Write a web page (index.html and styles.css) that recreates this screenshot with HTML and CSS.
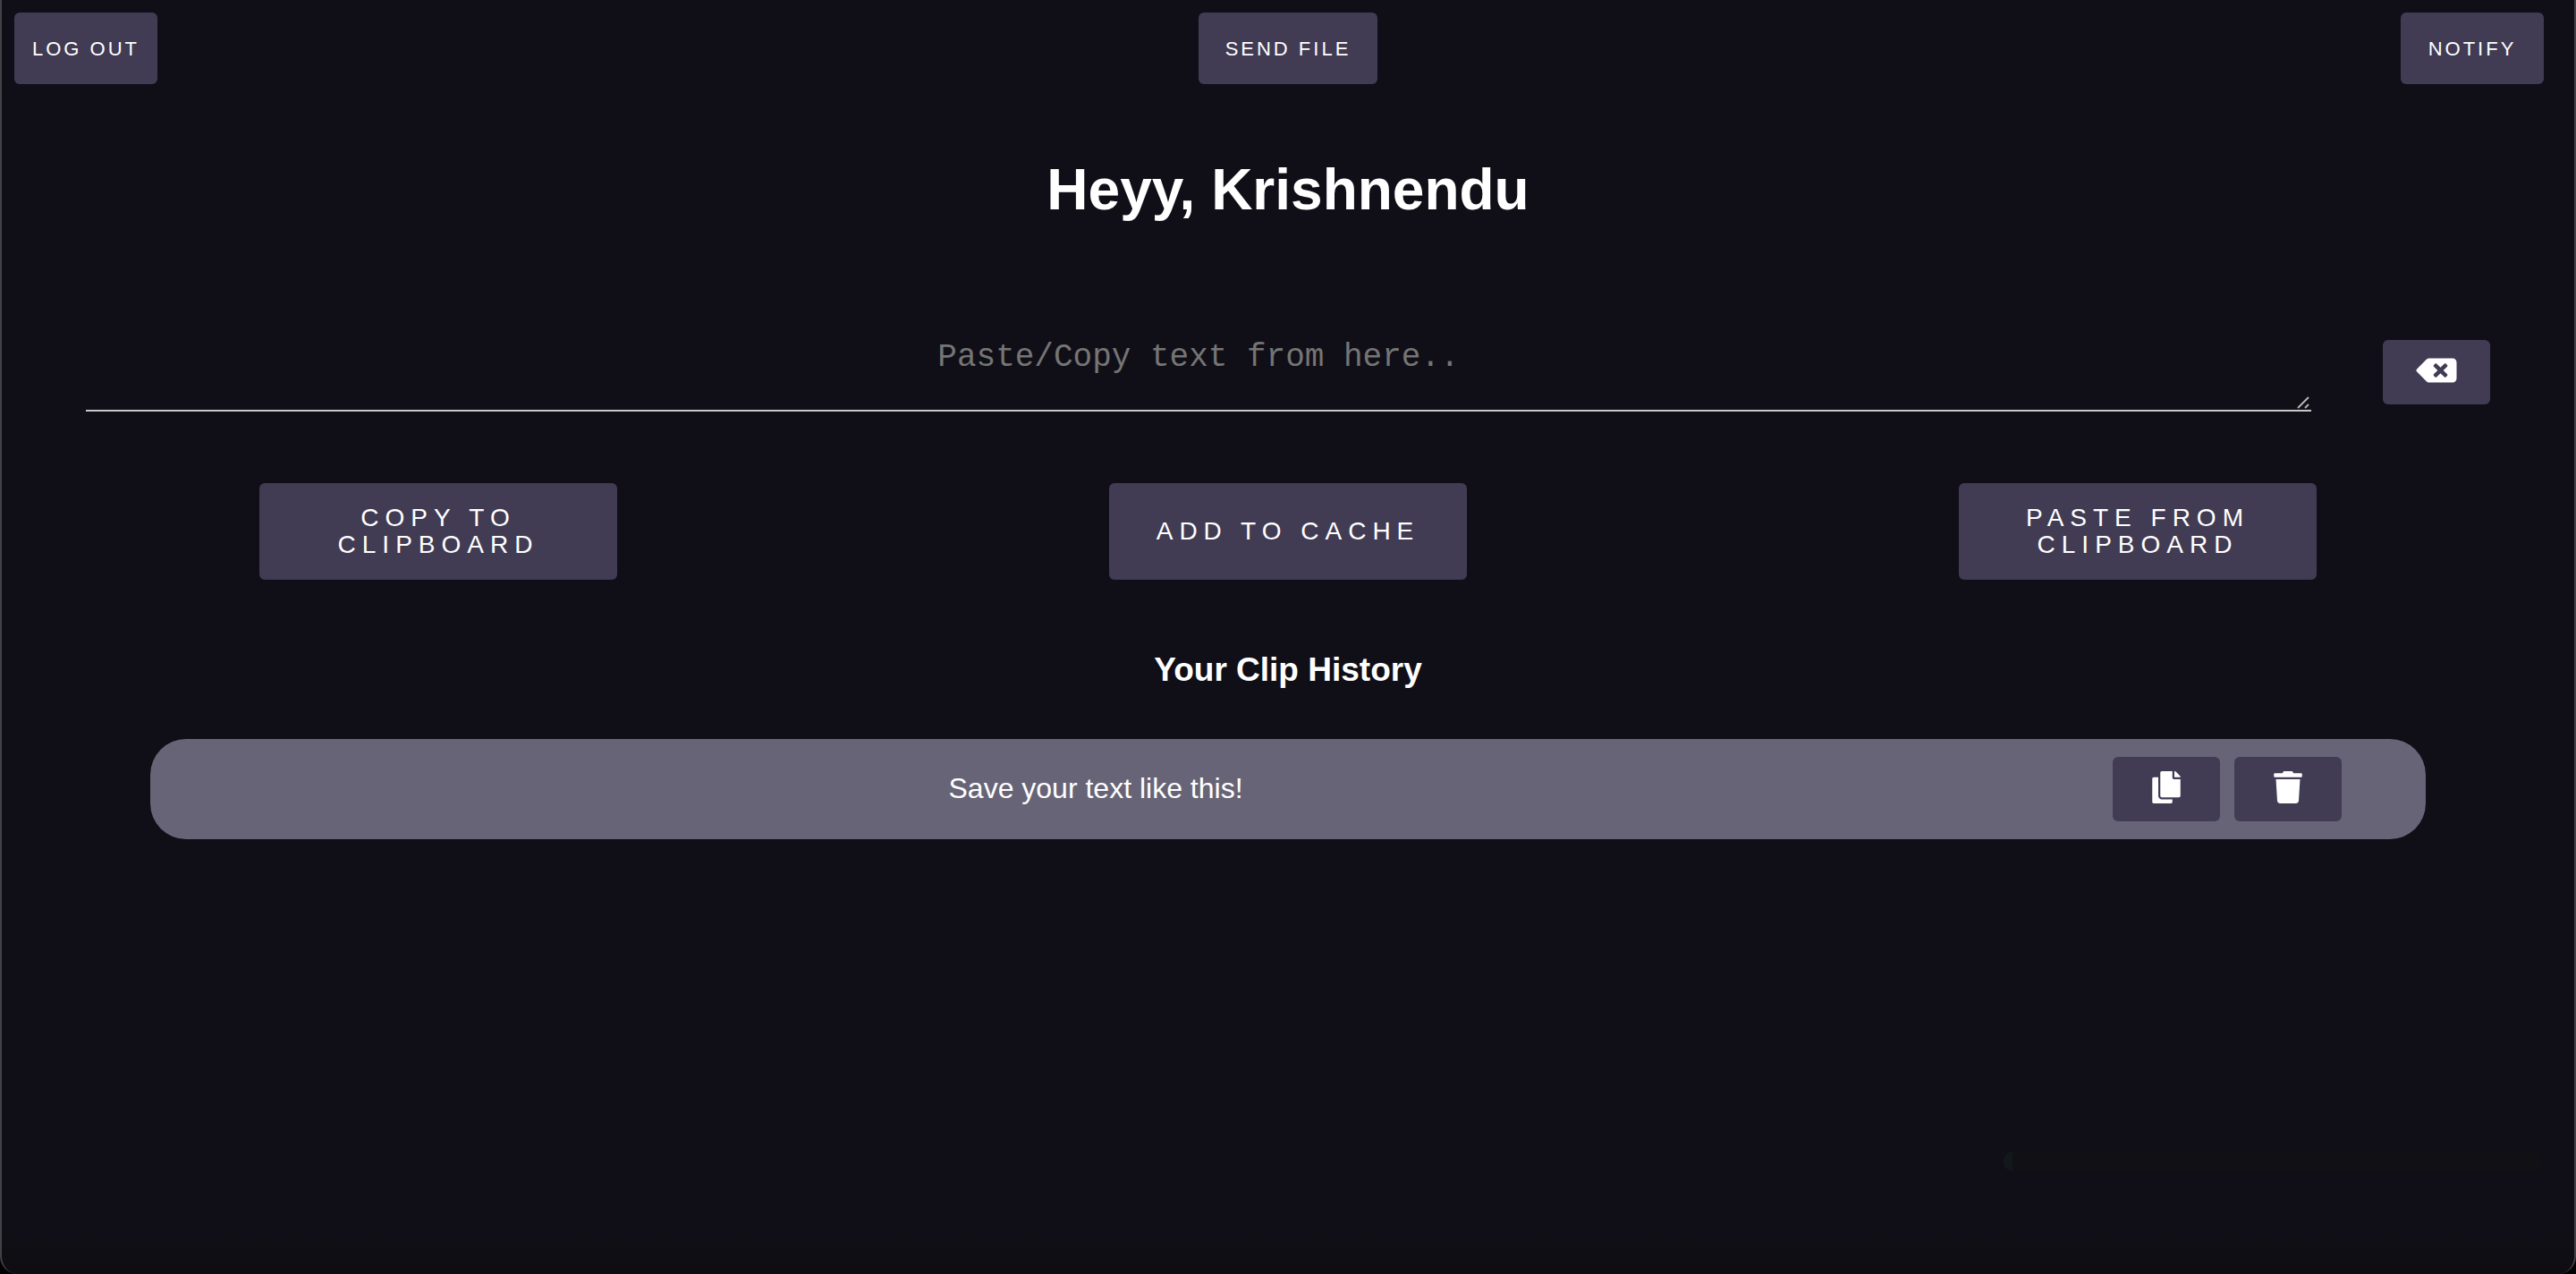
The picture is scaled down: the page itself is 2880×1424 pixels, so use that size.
FILE: index.html
```html
<!DOCTYPE html>
<html lang="en">
<head>
  <meta charset="utf-8">
  <meta name="viewport" content="width=device-width, initial-scale=1">
  <title>Clipboard</title>
  <link rel="stylesheet" href="styles.css">
</head>
<body>
  <div class="frame">
    <header class="topbar">
      <button class="btn btn-small" type="button">LOG OUT</button>
      <button class="btn btn-small btn-send" type="button">SEND FILE</button>
      <button class="btn btn-small btn-notify" type="button">NOTIFY</button>
    </header>

    <main>
      <h1 class="greeting">Heyy, Krishnendu</h1>

      <div class="editor">
        <div class="field">
          <textarea class="field-input" aria-label="Clip text" placeholder="Paste/Copy text from here.."></textarea>
          <svg class="field-grip" viewBox="0 0 14 14" aria-hidden="true">
            <path d="M1 13 13 1M9 13l4-4" fill="none" stroke="#b4b4b4" stroke-width="2"/>
          </svg>
        </div>
        <button class="btn btn-icon" type="button" aria-label="Clear text">
          <svg class="icon icon-wide" viewBox="0 0 640 512" aria-hidden="true"><path d="M576 64H205.26A63.97 63.97 0 0 0 160 82.75L9.37 233.37c-12.5 12.5-12.5 32.76 0 45.25L160 429.25c12 12 28.28 18.75 45.25 18.75H576c35.35 0 64-28.65 64-64V128c0-35.35-28.65-64-64-64zm-84.69 254.06c6.25 6.25 6.25 16.38 0 22.63l-22.62 22.62c-6.25 6.25-16.38 6.25-22.63 0L384 301.25l-62.06 62.06c-6.25 6.25-16.38 6.25-22.63 0l-22.62-22.62c-6.25-6.25-6.25-16.38 0-22.63L338.75 256l-62.06-62.06c-6.25-6.25-6.25-16.38 0-22.63l22.62-22.62c6.25-6.25 16.38-6.25 22.63 0L384 210.75l62.06-62.06c6.25-6.25 16.38-6.25 22.63 0l22.62 22.62c6.25 6.25 6.25 16.38 0 22.63L429.25 256l62.06 62.06z"/></svg>
        </button>
      </div>

      <div class="actions">
        <button class="btn btn-large" type="button">COPY TO CLIPBOARD</button>
        <button class="btn btn-large" type="button">ADD TO CACHE</button>
        <button class="btn btn-large" type="button">PASTE FROM CLIPBOARD</button>
      </div>

      <h2 class="history-title">Your Clip History</h2>
      <ul class="history">
        <li class="clip">
          <span class="clip-text">Save your text like this!</span>
          <div class="clip-tools">
            <button class="btn btn-icon" type="button" aria-label="Copy clip">
              <svg class="icon" viewBox="0 0 448 512" aria-hidden="true"><path d="M320 448v40c0 13.255-10.745 24-24 24H24c-13.255 0-24-10.745-24-24V120c0-13.255 10.745-24 24-24h72v296c0 30.879 25.121 56 56 56h168zm0-344V0H152c-13.255 0-24 10.745-24 24v368c0 13.255 10.745 24 24 24h272c13.255 0 24-10.745 24-24V128H344c-13.2 0-24-10.8-24-24zm120.971-31.029L375.029 7.029A24 24 0 0 0 358.059 0H352v96h96v-6.059a24 24 0 0 0-7.029-16.97z"/></svg>
            </button>
            <button class="btn btn-icon" type="button" aria-label="Delete clip">
              <svg class="icon" viewBox="0 0 448 512" aria-hidden="true"><path d="M432 32H312l-9.4-18.7A24 24 0 0 0 281.1 0H166.8a23.72 23.72 0 0 0-21.4 13.3L136 32H16A16 16 0 0 0 0 48v32a16 16 0 0 0 16 16h416a16 16 0 0 0 16-16V48a16 16 0 0 0-16-16zM53.2 467a48 48 0 0 0 47.9 45h245.8a48 48 0 0 0 47.9-45L416 128H32z"/></svg>
            </button>
          </div>
        </li>
      </ul>
    </main>

    <div class="toast-bar" aria-hidden="true"></div>
  </div>
</body>
</html>
```
FILE: styles.css
```css
* {
  box-sizing: border-box;
}

body {
  margin: 0;
  background: #000;
  color: #fff;
  font-family: "Liberation Sans", Arial, Helvetica, sans-serif;
}

.frame {
  position: relative;
  min-height: 100vh;
  border: 2px solid #424146;
  border-width: 0 2px;
  border-radius: 0 0 20px 20px;
  background: linear-gradient(to top, #0e0d11, #100f17 48px);
}

/* Buttons */

.btn {
  border: 0;
  border-radius: 6px;
  padding: 0;
  background: #413c54;
  color: #fff;
  font-family: inherit;
  text-align: center;
  cursor: pointer;
}

.btn-small {
  width: 160px;
  height: 80px;
  padding-top: 2px;
  font-size: 22px;
  letter-spacing: 3px;
}

.btn-send {
  justify-self: center;
  width: 200px;
}

.btn-notify {
  justify-self: end;
  margin-right: 20px;
}

.btn-large {
  width: 400px;
  height: 108px;
  padding: 0 24px;
  font-size: 28px;
  line-height: 30px;
  letter-spacing: 7px;
}

.btn-icon {
  display: flex;
  align-items: center;
  justify-content: center;
  width: 120px;
  height: 72px;
  padding-bottom: 4px;
}

.icon {
  width: 32px;
  height: 36px;
  fill: #fff;
}

.icon-wide {
  width: 46px;
}

/* Header */

.topbar {
  display: grid;
  grid-template-columns: 1fr 1fr 1fr;
  padding: 14px 14px 0;
}

.greeting {
  margin: 82px 0 0;
  font-size: 64px;
  line-height: 72px;
  text-align: center;
}

/* Text entry */

.editor {
  display: flex;
  align-items: center;
  gap: 80px;
  margin-top: 124px;
  padding: 0 94px;
}

.field {
  position: relative;
  flex: 1;
  display: flex;
}

.field-input {
  flex: 1;
  height: 88px;
  padding: 8px 0 0;
  border: 0;
  border-bottom: 2px solid #c8c8c8;
  outline: 0;
  background: transparent;
  color: #fff;
  font-family: "Liberation Mono", "Courier New", monospace;
  font-size: 36px;
  line-height: 40px;
  text-align: center;
  resize: none;
}

.field-input::placeholder {
  color: #757575;
}

.field-grip {
  position: absolute;
  right: 2px;
  bottom: 3px;
  width: 14px;
  height: 14px;
}

.actions {
  display: grid;
  grid-template-columns: repeat(3, 1fr);
  justify-items: center;
  margin-top: 80px;
  padding: 0 13px;
}

/* History */

.history-title {
  margin: 80px 0 0;
  font-size: 37px;
  line-height: 42px;
  text-align: center;
}

.history {
  margin: 56px 166px 0;
  padding: 0;
  list-style: none;
}

.clip {
  display: flex;
  align-items: center;
  padding: 20px 94px 20px 0;
  border-radius: 40px;
  background: #686477;
}

.clip-text {
  flex: 1;
  padding-bottom: 2px;
  font-size: 32px;
  line-height: 36px;
  text-align: center;
}

.clip-tools {
  display: flex;
  gap: 16px;
  padding-left: 80px;
}

/* Progress strip of the fading toast */

.toast-bar {
  position: absolute;
  right: 36px;
  bottom: 115px;
  width: 602px;
  height: 22px;
  border-radius: 11px;
  background: linear-gradient(to right, #13181b 10px, #111115 10px);
}
```
